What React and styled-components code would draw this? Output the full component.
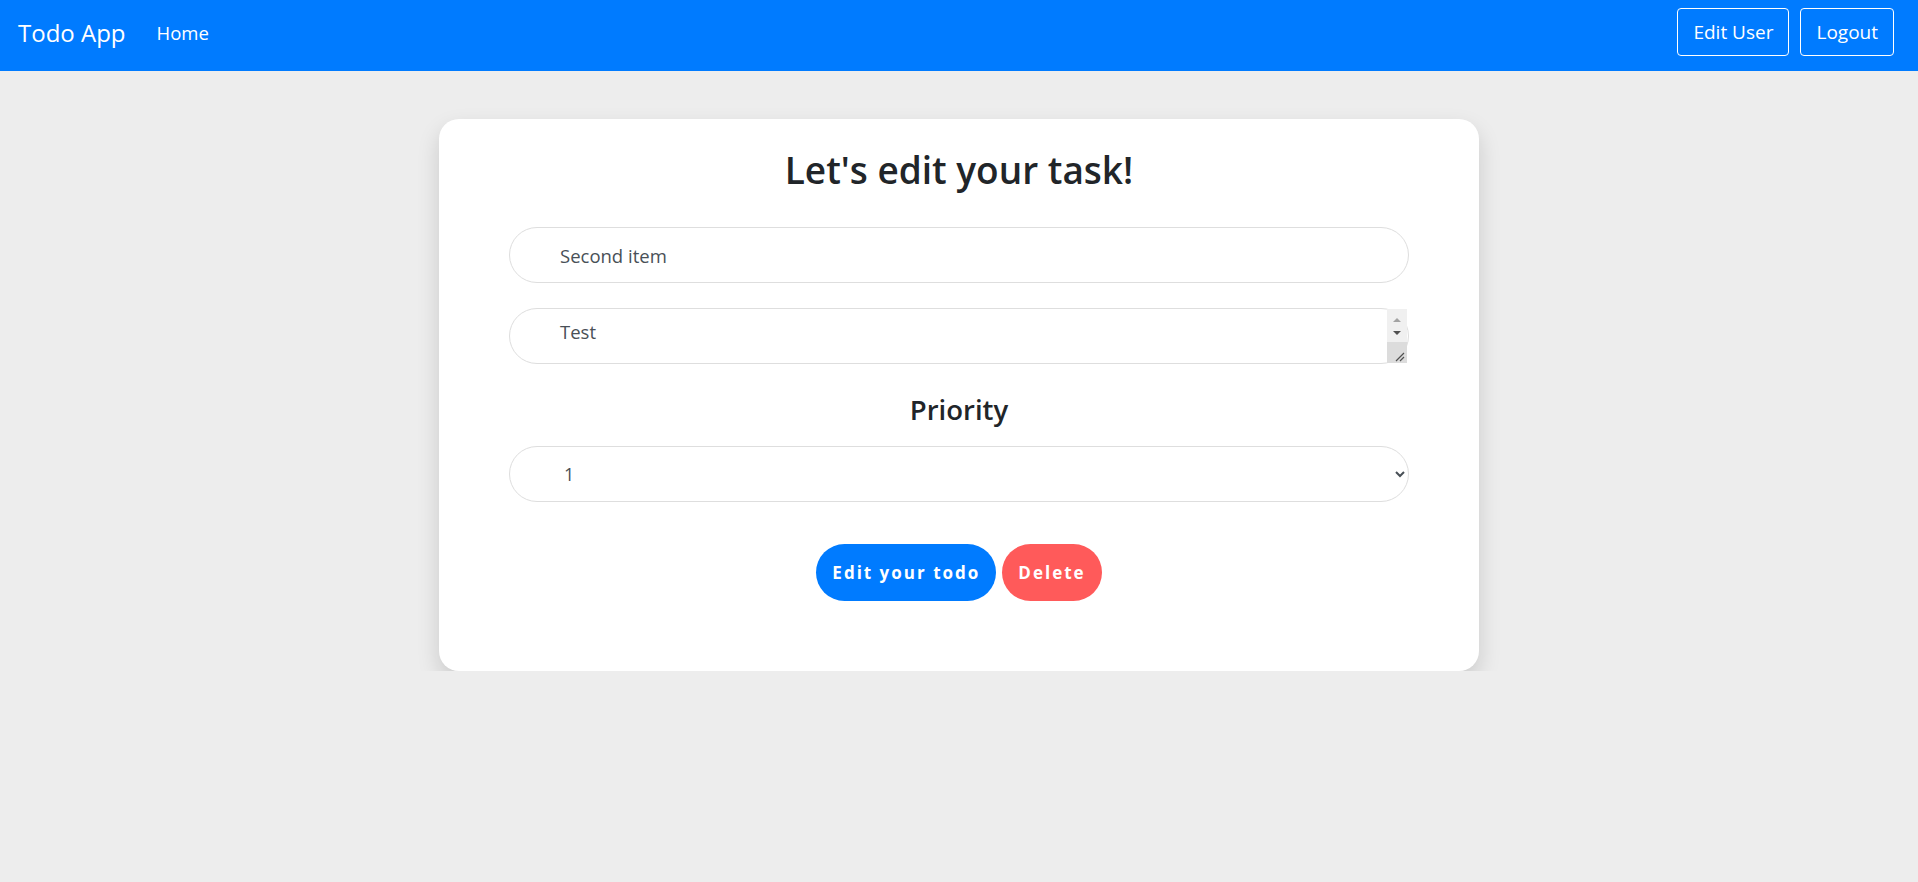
import React from 'react';
import styled, { createGlobalStyle } from 'styled-components';

const GlobalStyle = createGlobalStyle`
  body {
    margin: 0;
    background: #ededed;
    font-family: "Open Sans", "Noto Sans", sans-serif;
    color: #212529;
  }
`;

const NavBar = styled.nav`
  height: 71px;
  background: #007bff;
  display: flex;
  align-items: center;
  padding: 8px 24px 15px 18px;
  box-sizing: border-box;
`;

const Brand = styled.a`
  color: #fff;
  font-size: 24px;
  text-decoration: none;
  margin-right: 31px;
`;

const NavLink = styled.a`
  color: #fff;
  font-size: 18.5px;
  text-decoration: none;
`;

const NavRight = styled.div`
  margin-left: auto;
  display: flex;
  gap: 11px;
`;

const OutlineButton = styled.button`
  height: 48px;
  padding: 0 15px;
  background: transparent;
  border: 1px solid #fff;
  border-radius: 4px;
  color: #fff;
  font-family: inherit;
  font-size: 19px;
`;

const Main = styled.main`
  padding-top: 48px;
`;

const Card = styled.div`
  width: 1040px;
  margin: 0 auto;
  box-sizing: border-box;
  background: #fff;
  border-radius: 20px;
  box-shadow: 0 10px 22px rgba(0, 0, 0, 0.15);
  padding: 27px 70px 70px;
  display: flex;
  flex-direction: column;
`;

const Title = styled.h1`
  margin: 0 0 33px;
  text-align: center;
  font-size: 37px;
  line-height: 48px;
  font-weight: 600;
`;

const SubTitle = styled.h3`
  margin: 29px 0 19px;
  text-align: center;
  font-size: 27.5px;
  line-height: 34px;
  font-weight: 600;
`;

const fieldBase = `
  width: 100%;
  height: 56px;
  box-sizing: border-box;
  border: 1px solid #dedede;
  border-radius: 28px;
  background: #fff;
  font-family: "Open Sans", "Noto Sans", sans-serif;
  font-size: 18.5px;
  color: #495057;
  outline: none;
`;

const TextInput = styled.input`
  ${fieldBase}
  padding: 0 50px;
  margin-bottom: 25px;
`;

const AreaWrap = styled.div`
  position: relative;
`;

const TextArea = styled.textarea`
  ${fieldBase}
  padding: 10px 50px;
  overflow: hidden;
  resize: none;
  display: block;
`;

// the textarea's scrollbar and resize grip, drawn over its right edge
const FakeScroll = styled.div`
  position: absolute;
  top: 1px;
  right: 2px;
  bottom: 1px;
  width: 20px;
  display: flex;
  flex-direction: column;
`;

const ScrollTrack = styled.div`
  flex: 1;
  background: #f0f0f0;
  display: flex;
  align-items: center;
  justify-content: center;
`;

const Resizer = styled.div`
  height: 21px;
  background: #dcdcdc;
  display: flex;
  align-items: flex-end;
  justify-content: flex-end;
`;

const Select = styled.select`
  ${fieldBase}
  padding: 0 50px;
  font-size: 18px;
`;

const Actions = styled.div`
  display: flex;
  justify-content: center;
  gap: 6px;
  margin-top: 42px;
`;

const PillButton = styled.button`
  height: 57px;
  padding: 0 16px;
  border: none;
  border-radius: 29px;
  background: ${(p) => (p.danger ? '#ff5a5a' : '#007bff')};
  color: #fff;
  font-family: "Open Sans", "Noto Sans", sans-serif;
  font-size: 17px;
  font-weight: 700;
  letter-spacing: 2px;
`;

export default function App() {
  return (
    <>
      <GlobalStyle />
      <NavBar>
        <Brand href="#">Todo App</Brand>
        <NavLink href="#">Home</NavLink>
        <NavRight>
          <OutlineButton>Edit User</OutlineButton>
          <OutlineButton>Logout</OutlineButton>
        </NavRight>
      </NavBar>
      <Main>
        <Card>
          <Title>Let's edit your task!</Title>
          <TextInput defaultValue="Second item" />
          <AreaWrap>
            <TextArea rows={1} defaultValue={'Test\n\n\n'} />
            <FakeScroll>
              <ScrollTrack>
                <svg width="20" height="32" viewBox="0 0 20 32">
                  <path d="M6 12 L10 8 L14 12 Z" fill="#a3a3a3" />
                  <path d="M6 21 L14 21 L10 25 Z" fill="#505050" />
                </svg>
              </ScrollTrack>
              <Resizer>
                <svg width="14" height="14" viewBox="0 0 14 14">
                  <path d="M3 12 L11 4 M7 12 L11 8" stroke="#505050" strokeWidth="1.2" />
                </svg>
              </Resizer>
            </FakeScroll>
          </AreaWrap>
          <SubTitle>Priority</SubTitle>
          <Select defaultValue="1">
            <option value="1">1</option>
            <option value="2">2</option>
            <option value="3">3</option>
          </Select>
          <Actions>
            <PillButton>Edit your todo</PillButton>
            <PillButton danger>Delete</PillButton>
          </Actions>
        </Card>
      </Main>
    </>
  );
}
